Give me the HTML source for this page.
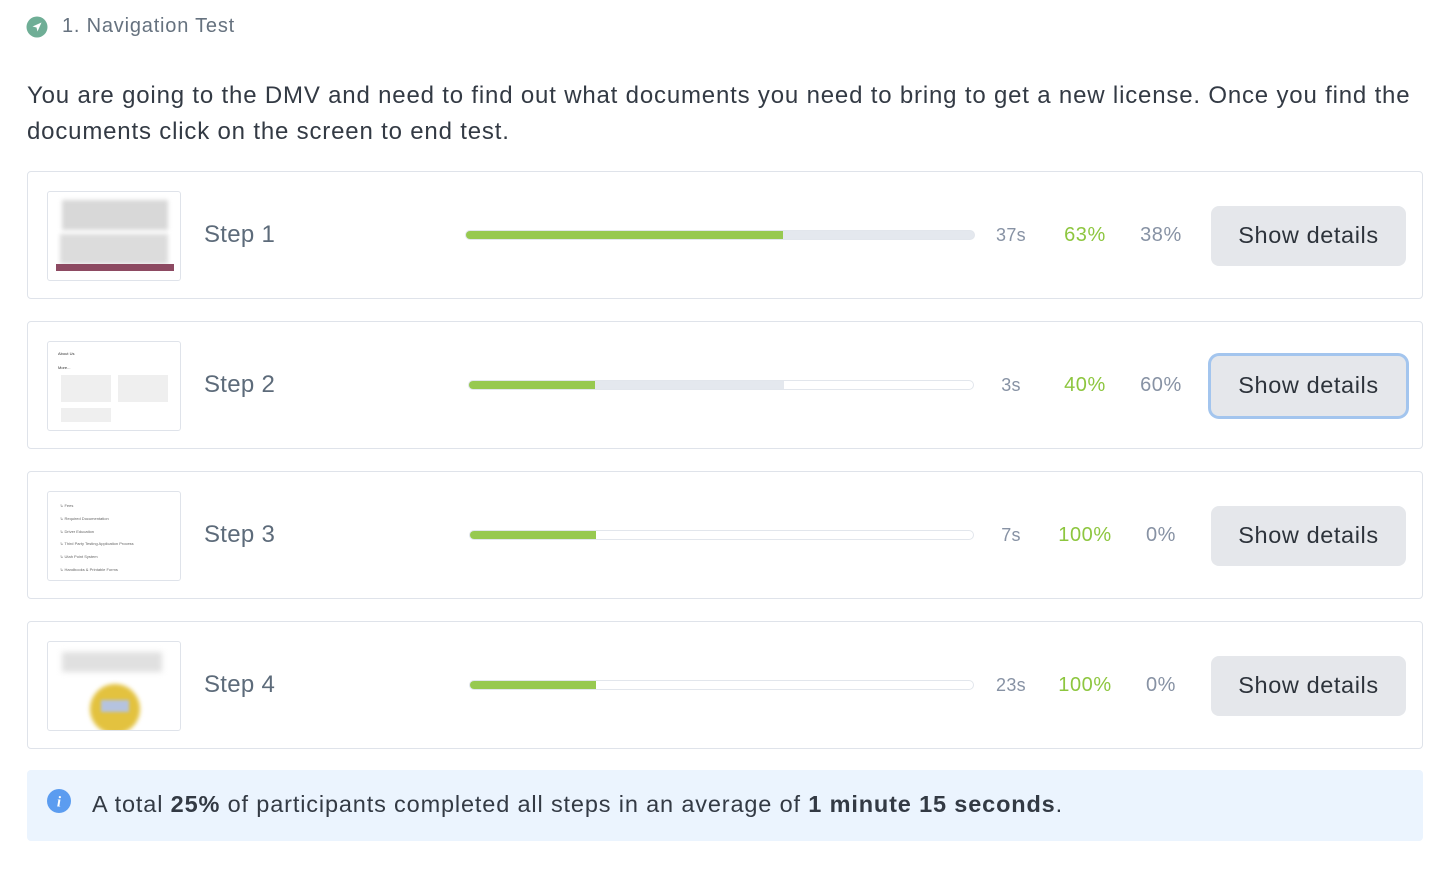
<!DOCTYPE html>
<html><head><meta charset="utf-8"><style>
*{margin:0;padding:0;box-sizing:border-box}
body{width:1444px;height:869px;background:#fff;font-family:"Liberation Sans",sans-serif;position:relative;overflow:hidden}
.a{position:absolute}
.hdr{left:62px;top:15px;font-size:20px;color:#66727f;letter-spacing:0.8px}
.desc{left:27px;top:78px;width:1430px;font-size:24px;line-height:36px;color:#333a44;letter-spacing:0.82px}
.card{position:absolute;left:27px;width:1396px;height:128px;border:1px solid #dfe3ea;border-radius:4px}
.th{position:absolute;left:19px;top:19px;width:134px;height:90px;border:1px solid #dfe3ea;border-radius:3px;overflow:hidden;background:#fff}
.lbl{position:absolute;left:176px;top:49px;font-size:24px;color:#5d6b7a;letter-spacing:0.3px}
.bar{position:absolute;top:58px;height:10px;border:1px solid #e2e6ec;border-radius:6px;overflow:hidden;background:#fff}
.bar i{position:absolute;top:0;bottom:0;left:0}
.t{position:absolute;top:53px;font-size:18px;color:#8792a4;width:50px;text-align:center;letter-spacing:0.3px}
.g{position:absolute;top:52px;font-size:20px;color:#8dc63f;width:60px;text-align:center;letter-spacing:0.6px}
.p{position:absolute;top:52px;font-size:20px;color:#8792a4;width:60px;text-align:center;letter-spacing:0.6px}
.btn{position:absolute;left:1183px;top:34px;width:195px;height:60px;background:#e5e7eb;border-radius:8px;font-size:23.5px;color:#2d333b;text-align:center;line-height:58px;letter-spacing:0.6px}
.info{left:27px;top:770px;width:1396px;height:71px;background:#ebf4fe;border-radius:4px}
</style></head><body>
<svg class="a" style="left:26px;top:16px" width="22" height="22" viewBox="0 0 22 22"><circle cx="11" cy="11" r="10.5" fill="#6fae96"/><path d="M15.5 6.5 L6.5 10.5 L10.5 11.5 L11.5 15.5 Z" fill="#fff"/></svg>
<div class="a hdr">1. Navigation Test</div>
<div class="a desc">You are going to the DMV and need to find out what documents you need to bring to get a new license. Once you find the<br>documents click on the screen to end test.</div>

<div class="card" style="top:171px">
 <div class="th"><div class="a" style="left:14px;top:8px;width:106px;height:30px;background:#d8d8d8;filter:blur(2px)"></div><div class="a" style="left:12px;top:42px;width:108px;height:30px;background:#dcdcdc;filter:blur(2px)"></div><div class="a" style="left:8px;top:72px;width:118px;height:7px;background:#8d4a62"></div></div>
 <div class="lbl">Step 1</div>
 <div class="bar" style="left:437px;width:510px;background:#e4e8ee"><i style="width:317px;background:#97c950"></i></div>
 <div class="t" style="left:958px">37s</div><div class="g" style="left:1027px">63%</div><div class="p" style="left:1103px">38%</div>
 <div class="btn">Show details</div>
</div>

<div class="card" style="top:321px">
 <div class="th"><div class="a" style="left:10px;top:9px;font-size:4px;color:#333">About Us</div><div class="a" style="left:10px;top:23px;font-size:4px;color:#333">More...</div>
 <div class="a" style="left:13px;top:33px;width:50px;height:27px;background:#efefef"></div><div class="a" style="left:70px;top:33px;width:50px;height:27px;background:#efefef"></div><div class="a" style="left:13px;top:66px;width:50px;height:14px;background:#efefef"></div></div>
 <div class="lbl">Step 2</div>
 <div class="bar" style="left:440px;width:506px"><i style="width:315px;background:#e4e8ee"></i><i style="width:126px;background:#97c950"></i></div>
 <div class="t" style="left:958px">3s</div><div class="g" style="left:1027px">40%</div><div class="p" style="left:1103px">60%</div>
 <div class="btn" style="box-shadow:0 0 0 3px #a3c5ee">Show details</div>
</div>

<div class="card" style="top:471px">
 <div class="th"><div class="a" style="left:12px;top:8px;font-size:4px;line-height:12.8px;color:#666">↳ Fees<br>↳ Required Documentation<br>↳ Driver Education<br>↳ Third Party Testing Application Process<br>↳ Utah Point System<br>↳ Handbooks &amp; Printable Forms</div></div>
 <div class="lbl">Step 3</div>
 <div class="bar" style="left:441px;width:505px"><i style="width:126px;background:#97c950"></i></div>
 <div class="t" style="left:958px">7s</div><div class="g" style="left:1027px">100%</div><div class="p" style="left:1103px">0%</div>
 <div class="btn">Show details</div>
</div>

<div class="card" style="top:621px">
 <div class="th"><div class="a" style="left:14px;top:10px;width:100px;height:20px;background:#e0e0e0;filter:blur(3px)"></div><div class="a" style="left:42px;top:42px;width:50px;height:50px;border-radius:50%;background:#e3c23f;filter:blur(2px)"></div><div class="a" style="left:53px;top:58px;width:28px;height:12px;background:#b5c3df;filter:blur(1.5px)"></div></div>
 <div class="lbl">Step 4</div>
 <div class="bar" style="left:441px;width:505px"><i style="width:126px;background:#97c950"></i></div>
 <div class="t" style="left:958px">23s</div><div class="g" style="left:1027px">100%</div><div class="p" style="left:1103px">0%</div>
 <div class="btn">Show details</div>
</div>

<div class="a info">
 <svg class="a" style="left:20px;top:19px" width="24" height="24" viewBox="0 0 24 24"><circle cx="12" cy="12" r="12" fill="#5b9cf0"/><text x="12" y="17.5" text-anchor="middle" font-family="Liberation Serif" font-style="italic" font-weight="bold" font-size="15" fill="#fff">i</text></svg>
 <div class="a" style="left:65px;top:21px;font-size:23.5px;color:#333a44;letter-spacing:0.85px">A total <b>25%</b> of participants completed all steps in an average of <b>1 minute 15 seconds</b>.</div>
</div>
</body></html>
